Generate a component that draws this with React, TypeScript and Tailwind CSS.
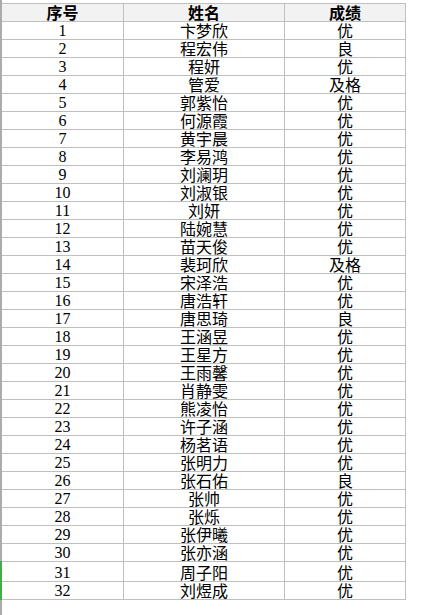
const rows: [number, string, string][] = [
  [1, "卞梦欣", "优"],
  [2, "程宏伟", "良"],
  [3, "程妍", "优"],
  [4, "管爱", "及格"],
  [5, "郭紫怡", "优"],
  [6, "何源霞", "优"],
  [7, "黄宇晨", "优"],
  [8, "李易鸿", "优"],
  [9, "刘澜玥", "优"],
  [10, "刘淑银", "优"],
  [11, "刘妍", "优"],
  [12, "陆婉慧", "优"],
  [13, "苗天俊", "优"],
  [14, "裴珂欣", "及格"],
  [15, "宋泽浩", "优"],
  [16, "唐浩轩", "优"],
  [17, "唐思琦", "良"],
  [18, "王涵昱", "优"],
  [19, "王星方", "优"],
  [20, "王雨馨", "优"],
  [21, "肖静雯", "优"],
  [22, "熊凌怡", "优"],
  [23, "许子涵", "优"],
  [24, "杨茗语", "优"],
  [25, "张明力", "优"],
  [26, "张石佑", "良"],
  [27, "张帅", "优"],
  [28, "张烁", "优"],
  [29, "张伊曦", "优"],
  [30, "张亦涵", "优"],
  [31, "周子阳", "优"],
  [32, "刘煜成", "优"],
]

const cell = "flex items-end justify-center border-r border-[#bfbfbf] pb-0 leading-[17px]"

export default function App() {
  return (
    <div className="flex w-[424px] h-[615px] bg-white overflow-hidden text-black text-[16px] font-['Noto_Sans_CJK_SC','Noto_Sans',sans-serif]">
      {/* left window edge, green marker near the bottom */}
      <div className="flex flex-col w-[2px] shrink-0">
        <div className="h-[561px] bg-[#ababab]" />
        <div className="h-[39px] bg-[#3fae49]" />
        <div className="flex-1 bg-[#ababab]" />
      </div>

      <div className="mt-[3px] w-[404px] self-start border-t border-[#bfbfbf]">
        <div className="grid grid-cols-[122px_161px_121px] h-[18px] bg-[#f2f2f2] border-b border-[#bfbfbf] font-bold">
          <div className={cell}>序号</div>
          <div className={cell}>姓名</div>
          <div className={cell}>成绩</div>
        </div>
        {rows.map(([n, name, grade]) => (
          <div
            key={n}
            className={`grid grid-cols-[122px_161px_121px] border-b border-[#bfbfbf] ${n === 31 ? "h-[20px]" : "h-[18px]"}`}
          >
            <div className={`${cell} font-['Liberation_Serif',serif]`}>{n}</div>
            <div className={cell}>{name}</div>
            <div className={cell}>{grade}</div>
          </div>
        ))}
      </div>
    </div>
  )
}
